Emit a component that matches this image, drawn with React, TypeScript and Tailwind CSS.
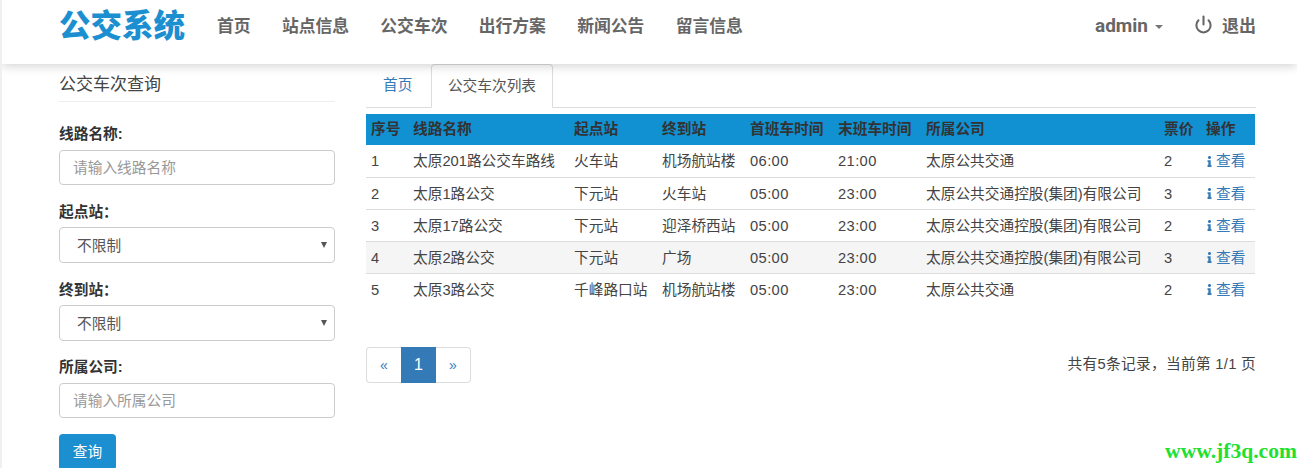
import React from "react";
import { FaInfo } from "react-icons/fa";
import { FiPower } from "react-icons/fi";

const nav = ["首页", "站点信息", "公交车次", "出行方案", "新闻公告", "留言信息"];
const cols = ["序号", "线路名称", "起点站", "终到站", "首班车时间", "末班车时间", "所属公司", "票价", "操作"];
const LONG = "太原公共交通控股(集团)有限公司";
const rows = [
  ["1", "太原201路公交车路线", "火车站", "机场航站楼", "06:00", "21:00", "太原公共交通", "2"],
  ["2", "太原1路公交", "下元站", "火车站", "05:00", "23:00", LONG, "3"],
  ["3", "太原17路公交", "下元站", "迎泽桥西站", "05:00", "23:00", LONG, "2"],
  ["4", "太原2路公交", "下元站", "广场", "05:00", "23:00", LONG, "3"],
  ["5", "太原3路公交", "千峰路口站", "机场航站楼", "05:00", "23:00", "太原公共交通", "2"],
];
const widths = [42, 161, 88, 88, 88, 88, 238, 42, 54];

function Label({ children }: { children: React.ReactNode }) {
  return <label className="block h-[20px] text-[14.7px] leading-[20px] font-bold text-[#333]">{children}</label>;
}

function TextBox({ placeholder }: { placeholder: string }) {
  return (
    <input
      placeholder={placeholder}
      className="block w-full h-[35px] mt-[6px] px-[13px] border border-[#ccc] rounded-[4px] text-[14.7px] text-[#555] placeholder:text-[#999] bg-white"
    />
  );
}

function SelectBox() {
  return (
    <div className="relative w-full h-[36px] mt-[5px] border border-[#ccc] rounded-[4px] bg-white pl-[17px] text-[14.7px] leading-[36px] text-[#555]">
      不限制
      <span className="absolute right-[7px] top-[14px] w-0 h-0 border-x-[3px] border-x-transparent border-t-[6px] border-t-[#555]" />
    </div>
  );
}

export default function App() {
  return (
    <div className="relative w-[1297px] h-[468px] overflow-hidden bg-white text-[#333] border-l-2 border-l-[#f0f0f0] font-['Liberation_Sans','Noto_Sans_CJK_SC',sans-serif]">
      <header className="relative z-10 flex items-start h-[64px] pl-[57px] pr-[41px] bg-white shadow-[0_2px_10px_rgba(0,0,0,0.18)]">
        <div className="mt-[6px] text-[31.5px] leading-[40px] font-black text-[#1b8fd0]">公交系统</div>
        <nav className="flex ml-[32px] mt-[15px] gap-[31.3px] text-[16.8px] leading-[24px] font-bold text-[#666]">
          {nav.map((n) => (
            <span key={n}>{n}</span>
          ))}
        </nav>
        <div className="ml-auto flex items-center mt-[13px] text-[#666] font-bold">
          <span className="font-['Roboto',sans-serif] text-[19px] leading-[24px]">admin</span>
          <span className="ml-[7px] mt-[2px] w-0 h-0 border-x-[4px] border-x-transparent border-t-[4px] border-t-[#777]" />
          <FiPower className="ml-[31px] mb-[4px] text-[#666]" size={19} strokeWidth={2.6} />
          <span className="ml-[9px] mt-[2px] text-[17px] leading-[24px]">退出</span>
        </div>
      </header>

      <main className="flex pl-[57px] pr-[41px]">
        <aside className="w-[276px] shrink-0">
          <h3 className="h-[38px] pt-[9px] border-b border-[#eee] text-[17px] leading-[24px] font-normal text-[#444]">公交车次查询</h3>
          <div className="mt-[22px]"><Label>线路名称:</Label></div>
          <TextBox placeholder="请输入线路名称" />
          <div className="mt-[17px]"><Label>起点站：</Label></div>
          <SelectBox />
          <div className="mt-[17px]"><Label>终到站：</Label></div>
          <SelectBox />
          <div className="mt-[16px]"><Label>所属公司:</Label></div>
          <TextBox placeholder="请输入所属公司" />
          <button className="block mt-[16px] w-[57px] h-[36px] rounded-[4px] bg-[#1b8fd0] text-white text-[14.7px]">查询</button>
        </aside>

        <section className="ml-[31px] w-[890px]">
          <div className="flex h-[44px] border-b border-[#ddd] text-[14.7px]">
            <a className="w-[65px] pl-[17px] pt-[11px] leading-[20px] text-[#337ab7]">首页</a>
            <span className="h-[44px] w-[122px] border border-[#ddd] border-b-white rounded-t-[4px] bg-white text-center pt-[11px] leading-[20px] text-[#555]">公交车次列表</span>
          </div>

          <table className="mt-[6px] w-[889px] table-fixed border-collapse text-[14.7px] leading-[20px]">
            <colgroup>
              {widths.map((w, i) => (
                <col key={i} style={{ width: w }} />
              ))}
            </colgroup>
            <thead>
              <tr className="bg-[#1190d2] text-left text-[#333]">
                {cols.map((c) => (
                  <th key={c} className="h-[31px] px-[5px] py-0 pb-[1px] font-bold whitespace-nowrap">{c}</th>
                ))}
              </tr>
            </thead>
            <tbody>
              {rows.map((r, i) => (
                <tr key={r[0]} className={`border-b border-[#ddd] ${i === 3 ? "bg-[#f5f5f5]" : ""} ${i === 4 ? "border-b-0" : ""}`}>
                  {r.map((v, j) => (
                    <td key={j} className={`h-[32px] px-[5px] py-0 pt-[1px] whitespace-nowrap text-[#444] ${j === 4 || j === 5 ? "tracking-[0.4px]" : ""}`}>{v}</td>
                  ))}
                  <td className="h-[32px] px-[5px] py-0 pt-[1px] whitespace-nowrap">
                    <a className="flex items-center text-[#337ab7]">
                      <FaInfo size={11} className="-ml-[1px] w-[9px]" />
                      <span className="ml-[2px]">查看</span>
                    </a>
                  </td>
                </tr>
              ))}
            </tbody>
          </table>

          <div className="flex items-center justify-between mt-[42px]">
            <div className="flex h-[36px] w-[105px] text-[14px]">
              <span className="w-[35px] border border-r-0 border-[#ddd] rounded-l-[4px] text-center leading-[34px] text-[#337ab7]">«</span>
              <span className="w-[35px] bg-[#337ab7] text-center leading-[36px] text-white text-[16px]">1</span>
              <span className="w-[35px] border border-l-0 border-[#ddd] rounded-r-[4px] text-center leading-[34px] text-[#337ab7]">»</span>
            </div>
            <div className="text-[14.7px] leading-[20px] tracking-[0.3px] text-[#444] mb-[2px]">共有5条记录，当前第 1/1 页</div>
          </div>
        </section>
      </main>

      <div className="absolute right-0 bottom-[7px] font-['Liberation_Serif',serif] font-bold text-[21.6px] leading-[20px] text-[#22e030]">www.jf3q.com</div>
    </div>
  );
}
